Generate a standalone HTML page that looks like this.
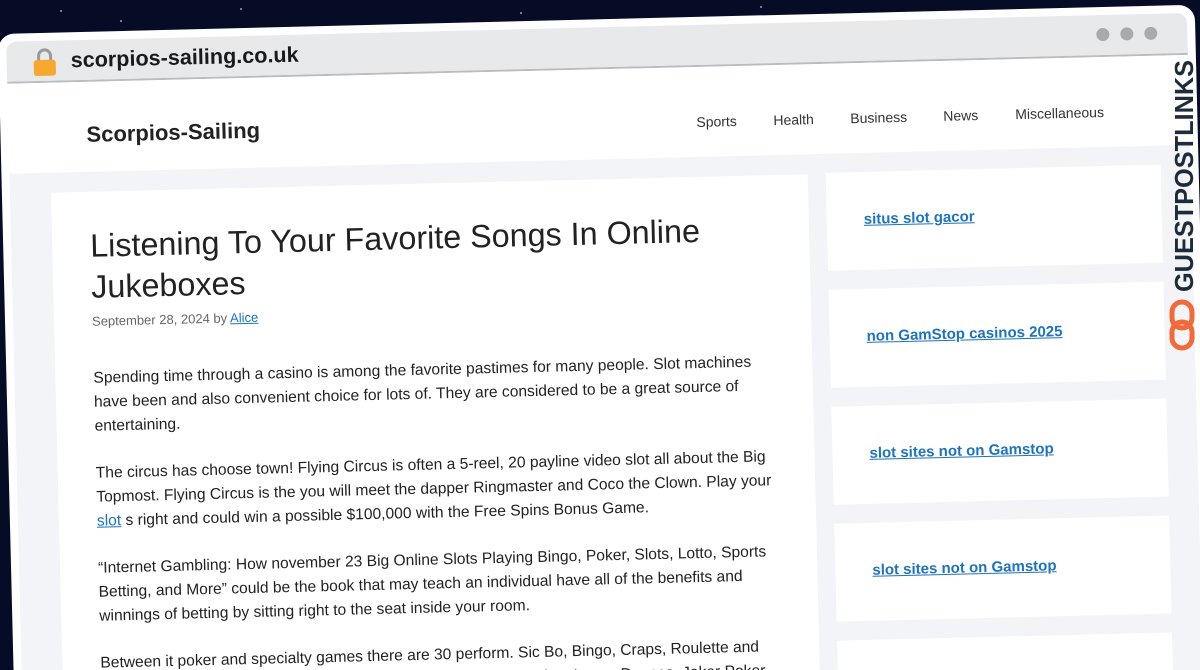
<!DOCTYPE html>
<html><head><meta charset="utf-8"><style>
*{margin:0;padding:0;box-sizing:border-box}
html,body{width:1200px;height:670px;overflow:hidden;background:#070c26;font-family:"Liberation Sans",sans-serif}
#wrap{position:absolute;left:0;top:0;width:1200px;height:670px;overflow:hidden}
.star{position:absolute;width:2px;height:2px;background:#cfd6ff;border-radius:50%;opacity:.7}
#frame{position:absolute;left:-2px;top:34px;width:1197px;height:720px;background:#fff;border-radius:16px 16px 0 0;transform:rotate(-1.4deg);transform-origin:0 0;overflow:hidden}
#bar{position:absolute;left:8px;top:8px;right:8px;height:42px;background:#e8e9eb;border-bottom:2px solid #b9bcc0;border-radius:10px 10px 0 0}
.lock{position:absolute;left:26px;top:7px}
.url{position:absolute;left:64px;top:7px;font-size:21.6px;font-weight:bold;color:#1a1a1a}
.dot{position:absolute;top:13px;width:13px;height:13px;border-radius:50%;background:#a8aaad}
#header{position:absolute;left:8px;top:52px;right:8px;height:88px;background:#fff}
.site{position:absolute;left:78px;top:38px;font-size:22px;font-weight:bold;color:#222}
.nav{position:absolute;top:45px;font-size:14px;color:#333}
#content{position:absolute;left:8px;top:140px;right:8px;bottom:0;background:#f2f4f7}
#art{position:absolute;left:41px;top:20px;width:757px;height:640px;background:#fff;padding:34px 38px}
h1{font-weight:normal;font-size:32.3px;line-height:41px;color:#222;white-space:nowrap}
.meta{font-size:13px;color:#666;margin-top:6px}
a{color:#1e73be;text-decoration:underline}
p{font-size:15.6px;line-height:24px;color:#222;margin-top:23px;white-space:nowrap}
.meta+p{margin-top:38px}
.side{position:absolute;left:816px;width:335px;height:98px;background:#fff}
.side a{position:absolute;left:37px;top:39px;font-size:15px;font-weight:bold}
#logo{position:absolute;left:1166px;top:52px;width:34px;height:300px}
</style></head><body><div id="wrap">
<div class="star" style="left:240px;top:8px"></div><div class="star" style="left:120px;top:20px"></div><div class="star" style="left:520px;top:12px"></div><div class="star" style="left:760px;top:6px"></div><div class="star" style="left:930px;top:14px"></div><div class="star" style="left:380px;top:25px"></div><div class="star" style="left:660px;top:22px"></div><div class="star" style="left:60px;top:10px"></div><div class="star" style="left:1060px;top:8px"></div><div class="star" style="left:850px;top:18px"></div>
<div id="frame">
 <div id="bar">
  <svg class="lock" width="24" height="29" viewBox="0 0 24 29"><path d="M6 13V8a6 6 0 0 1 12 0v5" fill="none" stroke="#9a9a9a" stroke-width="3"/><rect x="1" y="12" width="22" height="16" rx="3" fill="#f7a730"/></svg>
  <div class="url">scorpios-sailing.co.uk</div>
  <div class="dot" style="left:1090px"></div><div class="dot" style="left:1114px"></div><div class="dot" style="left:1138px"></div>
 </div>
 <div id="header">
  <div class="site">Scorpios-Sailing</div>
  <div class="nav" style="left:688px">Sports</div>
  <div class="nav" style="left:765px">Health</div>
  <div class="nav" style="left:842px">Business</div>
  <div class="nav" style="left:935px">News</div>
  <div class="nav" style="left:1007px">Miscellaneous</div>
 </div>
 <div id="content">
  <div id="art">
   <h1>Listening To Your Favorite Songs In Online<br>Jukeboxes</h1>
   <div class="meta">September 28, 2024 by <a>Alice</a></div>
   <p>Spending time through a casino is among the favorite pastimes for many people. Slot machines<br>have been and also convenient choice for lots of. They are considered to be a great source of<br>entertaining.</p>
   <p>The circus has choose town! Flying Circus is often a 5-reel, 20 payline video slot all about the Big<br>Topmost. Flying Circus is the you will meet the dapper Ringmaster and Coco the Clown. Play your<br><a>slot</a> s right and could win a possible $100,000 with the Free Spins Bonus Game.</p>
   <p>“Internet Gambling: How november 23 Big Online Slots Playing Bingo, Poker, Slots, Lotto, Sports<br>Betting, and More” could be the book that may teach an individual have all of the benefits and<br>winnings of betting by sitting right to the seat inside your room.</p>
   <p>Between it poker and specialty games there are 30 perform. Sic Bo, Bingo, Craps, Roulette and<br>Keno are specialty games. Video poker: Deuces Wild, Bonus Poker, Loose Deuces, Joker Poker</p>
  </div>
  <div class="side" style="top:19px"><a>situs slot gacor</a></div>
  <div class="side" style="top:136px"><a>non GamStop casinos 2025</a></div>
  <div class="side" style="top:253px"><a>slot sites not on Gamstop</a></div>
  <div class="side" style="top:370px"><a>slot sites not on Gamstop</a></div>
  <div class="side" style="top:487px;height:200px"></div>
 </div>
</div>
<div id="logo">
 <svg width="34" height="300" viewBox="0 0 34 300">
  <text transform="translate(27,240) rotate(-90)" font-family="Liberation Sans" font-weight="bold" font-size="26" fill="#1f2a3a" textLength="232" lengthAdjust="spacingAndGlyphs">GUESTPOSTLINKS</text>
  <g fill="none" stroke="#f26a3a" stroke-width="5">
   <rect x="6" y="250" width="20" height="26" rx="10"/>
   <rect x="6" y="270" width="20" height="26" rx="10"/>
  </g>
 </svg>
</div>
</div></body></html>
